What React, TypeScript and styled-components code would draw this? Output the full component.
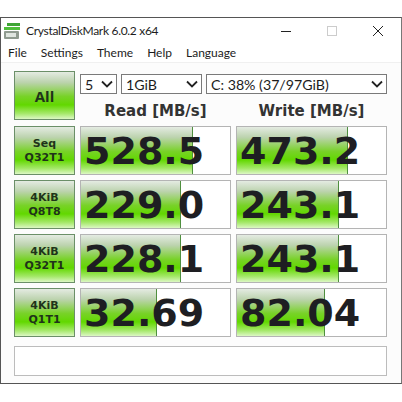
import styled, { createGlobalStyle } from 'styled-components';

const rows = [
  { top: 'Seq', bottom: 'Q32T1', read: '528.5', write: '473.2', readBar: 111, writeBar: 110 },
  { top: '4KiB', bottom: 'Q8T8', read: '229.0', write: '243.1', readBar: 99, writeBar: 101 },
  { top: '4KiB', bottom: 'Q32T1', read: '228.1', write: '243.1', readBar: 99, writeBar: 101 },
  { top: '4KiB', bottom: 'Q1T1', read: '32.69', write: '82.04', readBar: 75, writeBar: 87 },
];

const Global = createGlobalStyle`
  html, body { margin: 0; padding: 0; background: #fff; }
  body { width: 402px; height: 402px; overflow: hidden; }
`;

const greenGradient = `linear-gradient(180deg, #e4ebe2 0%, #bcd3ae 22%, #78d228 52%, #62d800 70%, #a4e868 88%, #dcf7c4 100%)`;

const Page = styled.div`
  padding-top: 17px;
`;

const Window = styled.div`
  box-sizing: border-box;
  width: 402px;
  height: 367px;
  border: 1px solid #555;
  border-right-color: #777;
  background: #fcfcfc;
  font-family: Lato, "Open Sans", sans-serif;
  color: #1c1c1c;
`;

const TitleBar = styled.div`
  display: flex;
  align-items: center;
  height: 25px;
  padding-left: 3px;
  background: #fff;
  font-size: 12px;
  letter-spacing: -0.3px;
`;

const AppIcon = styled.svg`
  width: 16px;
  height: 16px;
  margin-right: 6px;
`;

const Title = styled.span`
  flex: 1;
`;

const Controls = styled.div`
  display: flex;
  align-items: center;
`;

const ControlButton = styled.div`
  width: 46px;
  height: 25px;
  display: flex;
  align-items: center;
  justify-content: center;
`;

const MenuBar = styled.div`
  display: flex;
  gap: 14px;
  height: 19px;
  align-items: center;
  padding-left: 7px;
  background: #fff;
  border-bottom: 1px solid #f0f0f0;
  font-size: 12px;
`;

const Body = styled.div`
  display: grid;
  grid-template-columns: 61px 151px 151px;
  column-gap: 5px;
  row-gap: 5px;
  padding: 8px 0 0 13px;
`;

const TestButton = styled.div`
  box-sizing: border-box;
  height: 49px;
  border: 1px solid #6b8f68;
  background: ${greenGradient};
  display: flex;
  flex-direction: column;
  align-items: center;
  justify-content: center;
  font-family: "DejaVu Sans", sans-serif;
  font-weight: 700;
  font-size: 11px;
  line-height: 14px;
  color: #1f331a;
`;

const AllButton = styled(TestButton)`
  font-family: "Open Sans", sans-serif;
  font-size: 15px;
`;

const HeaderArea = styled.div`
  grid-column: 2 / span 2;
  display: grid;
  grid-template-columns: 151px 151px;
  column-gap: 5px;
  align-content: start;
`;

const Selects = styled.div`
  grid-column: 1 / span 2;
  display: flex;
  gap: 4px;
  margin-top: 3px;
`;

const Select = styled.div<{ $width: number }>`
  box-sizing: border-box;
  width: ${(p) => p.$width}px;
  height: 20px;
  display: flex;
  align-items: center;
  justify-content: space-between;
  padding: 0 3px 0 4px;
  background: #fff;
  border: 1px solid #7a7a7a;
  font-size: 14.2px;
`;

const ColumnTitle = styled.div`
  text-align: center;
  font-family: "DejaVu Sans", sans-serif;
  font-weight: 700;
  font-size: 15px;
  line-height: 20px;
  margin-top: 7px;
  color: #333;
`;

const Cell = styled.div`
  position: relative;
  box-sizing: border-box;
  height: 49px;
  background: #fff;
  border: 1px solid #b4b4b4;
`;

const Bar = styled.div`
  position: absolute;
  left: 0;
  top: 0;
  bottom: 0;
  background: ${greenGradient};
  border-right: 1px solid #4f8f3f;
`;

const Value = styled.div`
  position: relative;
  height: 100%;
  display: flex;
  align-items: center;
  padding-left: 3px;
  font-family: "DejaVu Sans", sans-serif;
  font-weight: 700;
  font-size: 38px;
  color: #1e1e22;
`;

const Status = styled.div`
  box-sizing: border-box;
  grid-column: 1 / span 3;
  height: 30px;
  margin-top: 4px;
  background: #fff;
  border: 1px solid #bcbcbc;
`;

const Chevron = () => (
  <svg width="12" height="8" viewBox="0 0 12 8">
    <path d="M1 1.5 L6 6.5 L11 1.5" fill="none" stroke="#222" strokeWidth="1.8" />
  </svg>
);

export default function App() {
  return (
    <Page>
      <Global />
      <Window>
        <TitleBar>
          <AppIcon viewBox="0 0 16 16">
            <rect x="3" y="0" width="13" height="3" fill="#3fa535" />
            <rect x="0" y="4" width="16" height="3" fill="#4fbf3a" />
            <rect x="0" y="8" width="15" height="8" rx="1" fill="#8f9a8f" />
            <rect x="2" y="10" width="10" height="4" fill="#dfe5df" />
          </AppIcon>
          <Title>CrystalDiskMark 6.0.2 x64</Title>
          <Controls>
            <ControlButton>
              <svg width="10" height="10" viewBox="0 0 10 10">
                <path d="M0 5.5 H10" stroke="#222" strokeWidth="1" />
              </svg>
            </ControlButton>
            <ControlButton>
              <svg width="10" height="10" viewBox="0 0 10 10">
                <rect x="0.5" y="0.5" width="9" height="9" fill="none" stroke="#ccc" />
              </svg>
            </ControlButton>
            <ControlButton>
              <svg width="10" height="10" viewBox="0 0 10 10">
                <path d="M0 0 L10 10 M10 0 L0 10" stroke="#222" strokeWidth="1" />
              </svg>
            </ControlButton>
          </Controls>
        </TitleBar>
        <MenuBar>
          <span>File</span>
          <span>Settings</span>
          <span>Theme</span>
          <span>Help</span>
          <span>Language</span>
        </MenuBar>
        <Body>
          <AllButton>All</AllButton>
          <HeaderArea>
            <Selects>
              <Select $width={37}>5<Chevron /></Select>
              <Select $width={81}>1GiB<Chevron /></Select>
              <Select $width={181}>C: 38% (37/97GiB)<Chevron /></Select>
            </Selects>
            <ColumnTitle>Read [MB/s]</ColumnTitle>
            <ColumnTitle>Write [MB/s]</ColumnTitle>
          </HeaderArea>
          {rows.map((r) => (
            <Row key={r.top + r.bottom} {...r} />
          ))}
          <Status />
        </Body>
      </Window>
    </Page>
  );
}

function Row({ top, bottom, read, write, readBar, writeBar }: (typeof rows)[number]) {
  return (
    <>
      <TestButton>
        <span>{top}</span>
        <span>{bottom}</span>
      </TestButton>
      <Cell>
        <Bar style={{ width: readBar }} />
        <Value>{read}</Value>
      </Cell>
      <Cell>
        <Bar style={{ width: writeBar }} />
        <Value>{write}</Value>
      </Cell>
    </>
  );
}
